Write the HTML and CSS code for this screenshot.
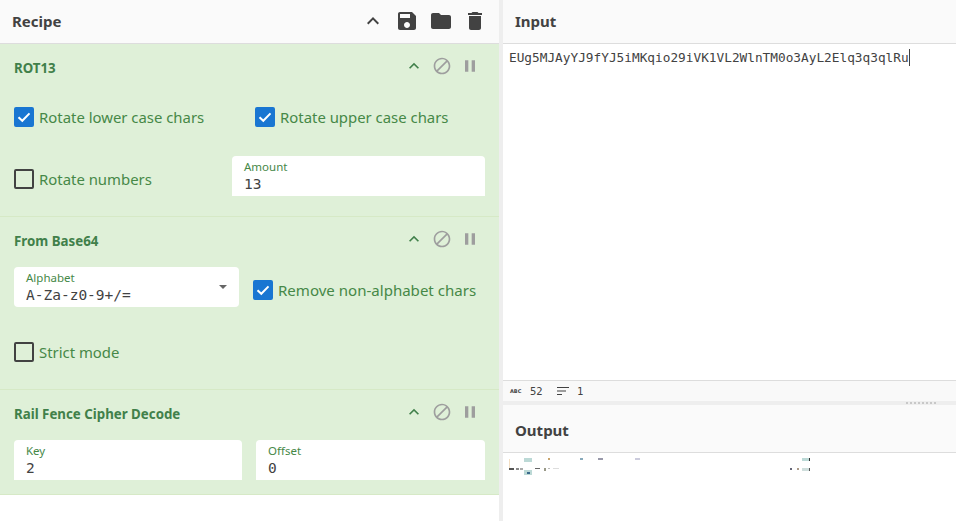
FILE: index.html
```html
<!DOCTYPE html>
<html lang="en">
<head>
<meta charset="utf-8">
<title>CyberChef</title>
<link rel="stylesheet" href="styles.css">
</head>
<body>
<div class="app">
  <section class="recipe">
    <header class="bar recipe-bar">
      <h1 class="bar-title">Recipe</h1>
      <div class="bar-icons">
        <svg class="icon-lg" viewBox="0 0 24 24"><path d="M7.41 15.41L12 10.83l4.59 4.58L18 14l-6-6-6 6z"/></svg>
        <svg class="icon-lg" viewBox="0 0 24 24"><path d="M17 3H5c-1.11 0-2 .9-2 2v14c0 1.1.89 2 2 2h14c1.1 0 2-.9 2-2V7l-4-4zm-5 16c-1.66 0-3-1.34-3-3s1.34-3 3-3 3 1.34 3 3-1.34 3-3 3zm3-10H5V5h10v4z"/></svg>
        <svg class="icon-lg" viewBox="0 0 24 24"><path d="M10 4H4c-1.1 0-1.99.9-1.99 2L2 18c0 1.1.9 2 2 2h16c1.1 0 2-.9 2-2V8c0-1.1-.9-2-2-2h-8l-2-2z"/></svg>
        <svg class="icon-lg" viewBox="0 0 24 24"><path d="M6 19c0 1.1.9 2 2 2h8c1.1 0 2-.9 2-2V7H6v12zM19 4h-3.5l-1-1h-5l-1 1H5v2h14V4z"/></svg>
      </div>
    </header>

    <article class="op op-rot">
      <div class="op-head">
        <h2 class="op-title">ROT13</h2>
        <div class="op-icons">
          <svg class="icon-sm icon-chev" viewBox="0 0 24 24"><path d="M7.41 15.41L12 10.83l4.59 4.58L18 14l-6-6-6 6z"/></svg>
          <svg class="icon-sm icon-muted" viewBox="0 0 24 24"><path d="M12 2C6.48 2 2 6.48 2 12s4.48 10 10 10 10-4.48 10-10S17.52 2 12 2zM4 12c0-4.42 3.58-8 8-8 1.85 0 3.55.63 4.9 1.69L5.69 16.9C4.63 15.55 4 13.85 4 12zm8 8c-1.85 0-3.55-.63-4.9-1.69L18.31 7.1C19.37 8.45 20 10.15 20 12c0 4.42-3.58 8-8 8z"/></svg>
          <svg class="icon-sm icon-muted" viewBox="0 0 24 24"><path d="M6 19h4V5H6v14zm8-14v14h4V5h-4z"/></svg>
        </div>
      </div>
      <div class="row row-rot1">
        <label class="check check-w241"><span class="box box-on"><svg viewBox="0 0 20 20"><path d="M4.5 10.2l3.8 3.6 7.2-7.4"/></svg></span>Rotate lower case chars</label>
        <label class="check"><span class="box box-on"><svg viewBox="0 0 20 20"><path d="M4.5 10.2l3.8 3.6 7.2-7.4"/></svg></span>Rotate upper case chars</label>
      </div>
      <div class="row row-rot2">
        <label class="check check-w218 check-low"><span class="box"></span>Rotate numbers</label>
        <div class="field field-amount"><span class="field-label">Amount</span><span class="field-value">13</span></div>
      </div>
    </article>

    <article class="op op-b64">
      <div class="op-head">
        <h2 class="op-title">From Base64</h2>
        <div class="op-icons">
          <svg class="icon-sm icon-chev" viewBox="0 0 24 24"><path d="M7.41 15.41L12 10.83l4.59 4.58L18 14l-6-6-6 6z"/></svg>
          <svg class="icon-sm icon-muted" viewBox="0 0 24 24"><path d="M12 2C6.48 2 2 6.48 2 12s4.48 10 10 10 10-4.48 10-10S17.52 2 12 2zM4 12c0-4.42 3.58-8 8-8 1.85 0 3.55.63 4.9 1.69L5.69 16.9C4.63 15.55 4 13.85 4 12zm8 8c-1.85 0-3.55-.63-4.9-1.69L18.31 7.1C19.37 8.45 20 10.15 20 12c0 4.42-3.58 8-8 8z"/></svg>
          <svg class="icon-sm icon-muted" viewBox="0 0 24 24"><path d="M6 19h4V5H6v14zm8-14v14h4V5h-4z"/></svg>
        </div>
      </div>
      <div class="row row-b641">
        <div class="field field-alpha">
          <span class="field-label">Alphabet</span><span class="field-value">A-Za-z0-9+/=</span>
          <svg class="caret" viewBox="0 0 8 4"><path d="M0 0h8L4 4z"/></svg>
        </div>
        <label class="check check-low check-wide"><span class="box box-on"><svg viewBox="0 0 20 20"><path d="M4.5 10.2l3.8 3.6 7.2-7.4"/></svg></span>Remove non-alphabet chars</label>
      </div>
      <div class="row row-b642">
        <label class="check"><span class="box"></span>Strict mode</label>
      </div>
    </article>

    <article class="op op-rail">
      <div class="op-head">
        <h2 class="op-title">Rail Fence Cipher Decode</h2>
        <div class="op-icons">
          <svg class="icon-sm icon-chev" viewBox="0 0 24 24"><path d="M7.41 15.41L12 10.83l4.59 4.58L18 14l-6-6-6 6z"/></svg>
          <svg class="icon-sm icon-muted" viewBox="0 0 24 24"><path d="M12 2C6.48 2 2 6.48 2 12s4.48 10 10 10 10-4.48 10-10S17.52 2 12 2zM4 12c0-4.42 3.58-8 8-8 1.85 0 3.55.63 4.9 1.69L5.69 16.9C4.63 15.55 4 13.85 4 12zm8 8c-1.85 0-3.55-.63-4.9-1.69L18.31 7.1C19.37 8.45 20 10.15 20 12c0 4.42-3.58 8-8 8z"/></svg>
          <svg class="icon-sm icon-muted" viewBox="0 0 24 24"><path d="M6 19h4V5H6v14zm8-14v14h4V5h-4z"/></svg>
        </div>
      </div>
      <div class="row row-rail">
        <div class="field field-key"><span class="field-label">Key</span><span class="field-value">2</span></div>
        <div class="field field-offset"><span class="field-label">Offset</span><span class="field-value">0</span></div>
      </div>
    </article>
  </section>

  <div class="v-gutter"></div>

  <section class="io">
    <header class="bar io-bar"><h1 class="bar-title">Input</h1></header>
    <div class="input-area"><span class="input-text">EUg5MJAyYJ9fYJ5iMKqio29iVK1VL2WlnTM0o3AyL2Elq3q3qlRu</span><span class="cursor"></span></div>
    <footer class="status">
      <span class="status-abc">ABC</span><span class="status-num status-len">52</span>
      <svg class="status-lines" viewBox="0 0 12 8"><path d="M0 0h12v1H0zM0 3.5h9v1H0zM0 7h5v1H0z"/></svg>
      <span class="status-num">1</span>
    </footer>
    <div class="h-gutter"><span class="grip"></span></div>
    <header class="bar io-bar output-bar"><h1 class="bar-title">Output</h1></header>
    <div class="output-area">
      <svg class="garble" width="453" height="24" viewBox="0 0 453 24">
        <rect x="21" y="5" width="8" height="4" fill="#bcd9d6"/>
        <rect x="21" y="17" width="8" height="5" fill="#bcd9d6"/>
        <rect x="299" y="5" width="8" height="3" fill="#bcd9d6"/>
        <rect x="306" y="5" width="1" height="3" fill="#333"/>
        <rect x="299" y="15" width="8" height="3" fill="#cfdedc"/>
        <rect x="306" y="15" width="1" height="3" fill="#555"/>
        <rect x="6" y="15" width="5" height="2" fill="#555"/>
        <rect x="13" y="15" width="3" height="2" fill="#888"/>
        <rect x="17" y="15" width="3" height="2" fill="#aaa"/>
        <rect x="6" y="6" width="1" height="9" fill="#f4dfc4"/>
        <rect x="24" y="19" width="3" height="2" fill="#3c6a8c"/>
        <rect x="32" y="15" width="5" height="1" fill="#666"/>
        <rect x="41" y="15" width="2" height="3" fill="#998"/>
        <rect x="45" y="15" width="2" height="1" fill="#bbb"/>
        <rect x="50" y="15" width="6" height="1" fill="#ddd"/>
        <rect x="45" y="5" width="2" height="2" fill="#c9a46c"/>
        <rect x="77" y="5" width="3" height="2" fill="#8ab"/>
        <rect x="95" y="5" width="5" height="2" fill="#99a"/>
        <rect x="132" y="5" width="5" height="2" fill="#ccd"/>
        <rect x="287" y="15" width="2" height="2" fill="#667"/>
        <rect x="294" y="15" width="2" height="2" fill="#a98"/>
      </svg>
    </div>
  </section>
</div>
</body>
</html>
```
FILE: styles.css
```css
* { box-sizing: border-box; }
html, body { margin: 0; height: 100%; }
body { font-family: "Noto Sans", "Open Sans", sans-serif; color: #424242; background: #fff; overflow: hidden; }
.app { display: flex; height: 521px; }

.recipe { width: 499px; flex: none; background: #fff; }
.v-gutter { width: 4px; flex: none; background: #eeeeee; }
.io { flex: 1; display: flex; flex-direction: column; min-width: 0; }

.bar { display: flex; align-items: center; justify-content: space-between; height: 44px; background: #fafafa; border-bottom: 1px solid #dddddd; }
.recipe-bar { padding: 0 12px; }
.io-bar { padding: 0 12px 2px; }
.output-bar { height: 48px; flex: none; padding: 2px 12px 0; }
.bar-title { margin: 0; font-size: 15px; line-height: 20px; font-weight: 700; color: #424242; }
.recipe-bar .bar-title { margin-bottom: 2px; }
.bar-icons { display: flex; gap: 10px; margin-top: -2px; }
.icon-lg { width: 24px; height: 24px; fill: #424242; display: block; }

.op { background: #dff0d8; border-bottom: 1px solid #d6e9c6; padding: 14px 14px 0; color: #468847; }
.op-rot { height: 173px; }
.op-b64 { height: 173px; }
.op-rail { height: 105px; }
.op-head { display: flex; justify-content: space-between; height: 20px; align-items: center; }
.op-title { margin: 0; font-size: 13.3px; font-weight: 700; color: #41804a; }
.op-icons { display: flex; gap: 8px; margin-right: 5px; margin-top: -4px; }
.icon-sm { width: 20px; height: 20px; display: block; }
.icon-chev { fill: #41804a; }
.icon-muted { fill: #9e9e9e; }

.row { display: flex; align-items: center; height: 40px; }
.row-rot1 { margin-top: 19px; }
.row-rot2 { margin-top: 19px; }
.row-b641 { margin-top: 16px; }
.row-b642 { margin-top: 25px; }
.row-rail { margin-top: 16px; gap: 14px; }

.check { display: flex; align-items: center; gap: 5px; font-size: 14.9px; color: #468847; white-space: nowrap; }
.check-w241 { width: 241px; }
.check-w218 { width: 218px; }
.check-low { margin-top: 6px; }
.check-wide { font-size: 15.05px; }
.box { width: 20px; height: 20px; flex: none; border: 2px solid #424242; border-radius: 2px; }
.box svg { display: block; width: 20px; height: 20px; margin: -2px; fill: none; stroke: #fff; stroke-width: 2; }
.box-on { background: #1976d2; border-color: #1976d2; }

.field { position: relative; height: 40px; background: #fff; border-radius: 4px 4px 0 0; padding: 4px 12px 0; display: flex; flex-direction: column; }
.field-amount { width: 253px; }
.field-alpha { width: 225px; margin-right: 14px; border-radius: 4px; }
.field-key { width: 228px; }
.field-offset { width: 229px; }
.field-label { font-size: 11.5px; line-height: 14px; color: #468847; }
.field-value { font-family: "DejaVu Sans Mono", monospace; font-size: 14.5px; line-height: 21px; color: #424242; }
.caret { position: absolute; right: 12px; top: 18px; width: 8px; height: 4px; fill: #666; }

.input-area { flex: 1; background: #fff; padding: 5px 6px 0; display: flex; align-items: flex-start; min-height: 0; }
.input-text { font-family: "DejaVu Sans Mono", monospace; font-size: 12.77px; line-height: 17px; color: #424242; }
.cursor { width: 1px; height: 17px; background: #424242; }

.status { display: flex; align-items: center; height: 21px; flex: none; background: #f9f9f9; border-top: 1px solid #ddd; padding-left: 7px; }
.status-abc { font-family: "DejaVu Sans", sans-serif; font-size: 5px; font-weight: 700; color: #424242; width: 20px; }
.status-num { font-family: "DejaVu Sans Mono", monospace; font-size: 10.5px; color: #424242; }
.status-len { width: 27px; }
.status-lines { width: 12px; height: 8px; fill: #424242; margin-right: 8px; }

.h-gutter { height: 4px; flex: none; background: #eeeeee; display: flex; justify-content: flex-end; padding-right: 20px; }
.grip { width: 30px; height: 2px; margin-top: 1px; background: repeating-linear-gradient(90deg, #c8c8c8 0 2px, transparent 2px 4px); }

.output-area { height: 68px; flex: none; background: #fff; }
.garble { display: block; }
```
